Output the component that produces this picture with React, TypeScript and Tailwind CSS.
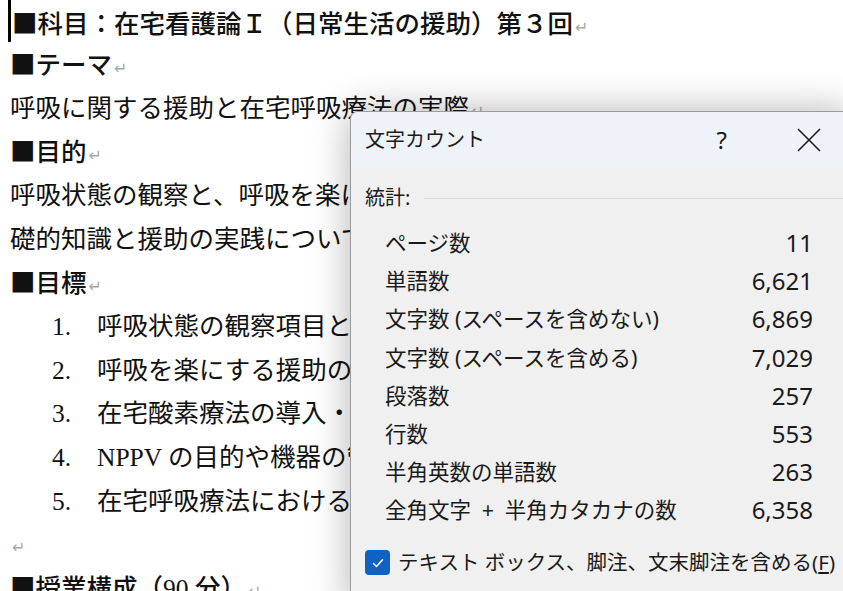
import React from 'react';

const docFont = { fontFamily: '"Liberation Serif", "Noto Sans CJK JP", serif' };
const uiFont = { fontFamily: '"Noto Sans", "Noto Sans CJK JP", sans-serif' };
const cjk = { fontFamily: '"Noto Sans CJK JP", sans-serif' };

const Mark = () => (
  <span className="ml-[2px] text-[16px] font-normal text-[#a8a8a8]" style={{ fontFamily: '"DejaVu Sans", sans-serif' }}>
    ↵
  </span>
);

const Sq = () => <span style={cjk}>■</span>;

const goals = [
  '呼吸状態の観察項目と評価方法を説明できる。',
  '呼吸を楽にする援助の方法を理解する。',
  '在宅酸素療法の導入・管理について理解する。',
  'NPPV の目的や機器の管理について理解する。',
  '在宅呼吸療法における家族への支援を考える。',
];

const stats = [
  { label: 'ページ数', value: '11' },
  { label: '単語数', value: '6,621' },
  { label: '文字数 (スペースを含めない)', value: '6,869' },
  { label: '文字数 (スペースを含める)', value: '7,029' },
  { label: '段落数', value: '257' },
  { label: '行数', value: '553' },
  { label: '半角英数の単語数', value: '263' },
  { label: '全角文字\u2002+\u2002半角カタカナの数', value: '6,358' },
];

export default function App() {
  return (
    <div className="relative h-[591px] w-[843px] overflow-hidden bg-white">
      {/* Document */}
      <div className="pl-[10px] text-[25.5px] leading-[43.6px] text-[#111]" style={docFont}>
        <div className="h-[43.6px] pl-[2px] font-medium whitespace-nowrap">
          <Sq />科目：在宅看護論Ｉ（日常生活の援助）第３回<Mark />
        </div>
        <div className="relative -top-[3px] h-[43.6px] font-medium"><Sq />テーマ<Mark /></div>
        <div className="h-[43.6px] whitespace-nowrap">呼吸に関する援助と在宅呼吸療法の実際<Mark /></div>
        <div className="relative -top-[3px] h-[43.6px] font-medium"><Sq />目的<Mark /></div>
        <div className="h-[43.6px] whitespace-nowrap">呼吸状態の観察と、呼吸を楽にする援助の方法を学び、在宅呼吸療法の基</div>
        <div className="h-[43.6px] whitespace-nowrap">礎的知識と援助の実践について理解する。<Mark /></div>
        <div className="relative -top-[3px] h-[43.6px] font-medium"><Sq />目標<Mark /></div>
        {goals.map((g, i) => (
          <div key={i} className="flex h-[43.6px] whitespace-nowrap">
            <span className="ml-[42px] w-[45px] shrink-0">{i + 1}.</span>
            <span>{g}<Mark /></span>
          </div>
        ))}
        <div className="h-[43.6px]"><Mark /></div>
        <div className="relative -top-[3px] h-[43.6px] font-medium whitespace-nowrap"><Sq />授業構成（90 分）<Mark /></div>
      </div>

      {/* text cursor */}
      <div className="absolute left-[8px] top-0 h-[42px] w-[3px] bg-black" />

      {/* Word count dialog */}
      <div
        className="absolute left-[350px] top-[111px] h-[500px] w-[500px] overflow-hidden rounded-tl-[8px] border border-[#9c9c9c] bg-[#f0f0f0] text-[#1a1a1a] shadow-[0_0_38px_rgba(0,0,0,0.3)]"
        style={uiFont}
      >
        <div className="flex h-[56px] items-center bg-[#eef3f9] pl-[14px] pr-[27px]">
          <span className="flex-1 text-[20px]">文字カウント</span>
          <span className="text-[24px]">?</span>
          <svg className="ml-[69px]" width="26" height="26" viewBox="0 0 26 26" fill="none" stroke="#1a1a1a" strokeWidth="1.6">
            <path d="M2 2 L24 24 M24 2 L2 24" />
          </svg>
        </div>

        <div className="pl-[14px] pt-[16px]">
          <div className="flex h-[28px] items-center">
            <span className="text-[20px]">統計:</span>
            <div className="ml-[14px] h-px flex-1 bg-[#d9d9d9]" />
          </div>

          <div className="mt-[12px] w-[448px] pl-[20px]">
            {stats.map((s) => (
              <div key={s.label} className="flex h-[38.2px] items-center justify-between">
                <span className="text-[21.5px]">{s.label}</span>
                <span className="text-[24px]">{s.value}</span>
              </div>
            ))}
          </div>

          <div className="mt-[20px] flex h-[26px] items-center">
            <div className="flex h-[25px] w-[25px] items-center justify-center rounded-[4px] bg-[#0f62c4]">
              <svg width="14" height="14" viewBox="0 0 14 14" fill="none" stroke="white" strokeWidth="1.6" strokeLinecap="round" strokeLinejoin="round">
                <path d="M2.5 7.5 L5.5 10.5 L11.5 3.8" />
              </svg>
            </div>
            <span className="ml-[8px] whitespace-nowrap text-[20.5px]">
              テキスト ボックス、脚注、文末脚注を含める(<span className="underline">F</span>)
            </span>
          </div>
        </div>
      </div>
    </div>
  );
}
